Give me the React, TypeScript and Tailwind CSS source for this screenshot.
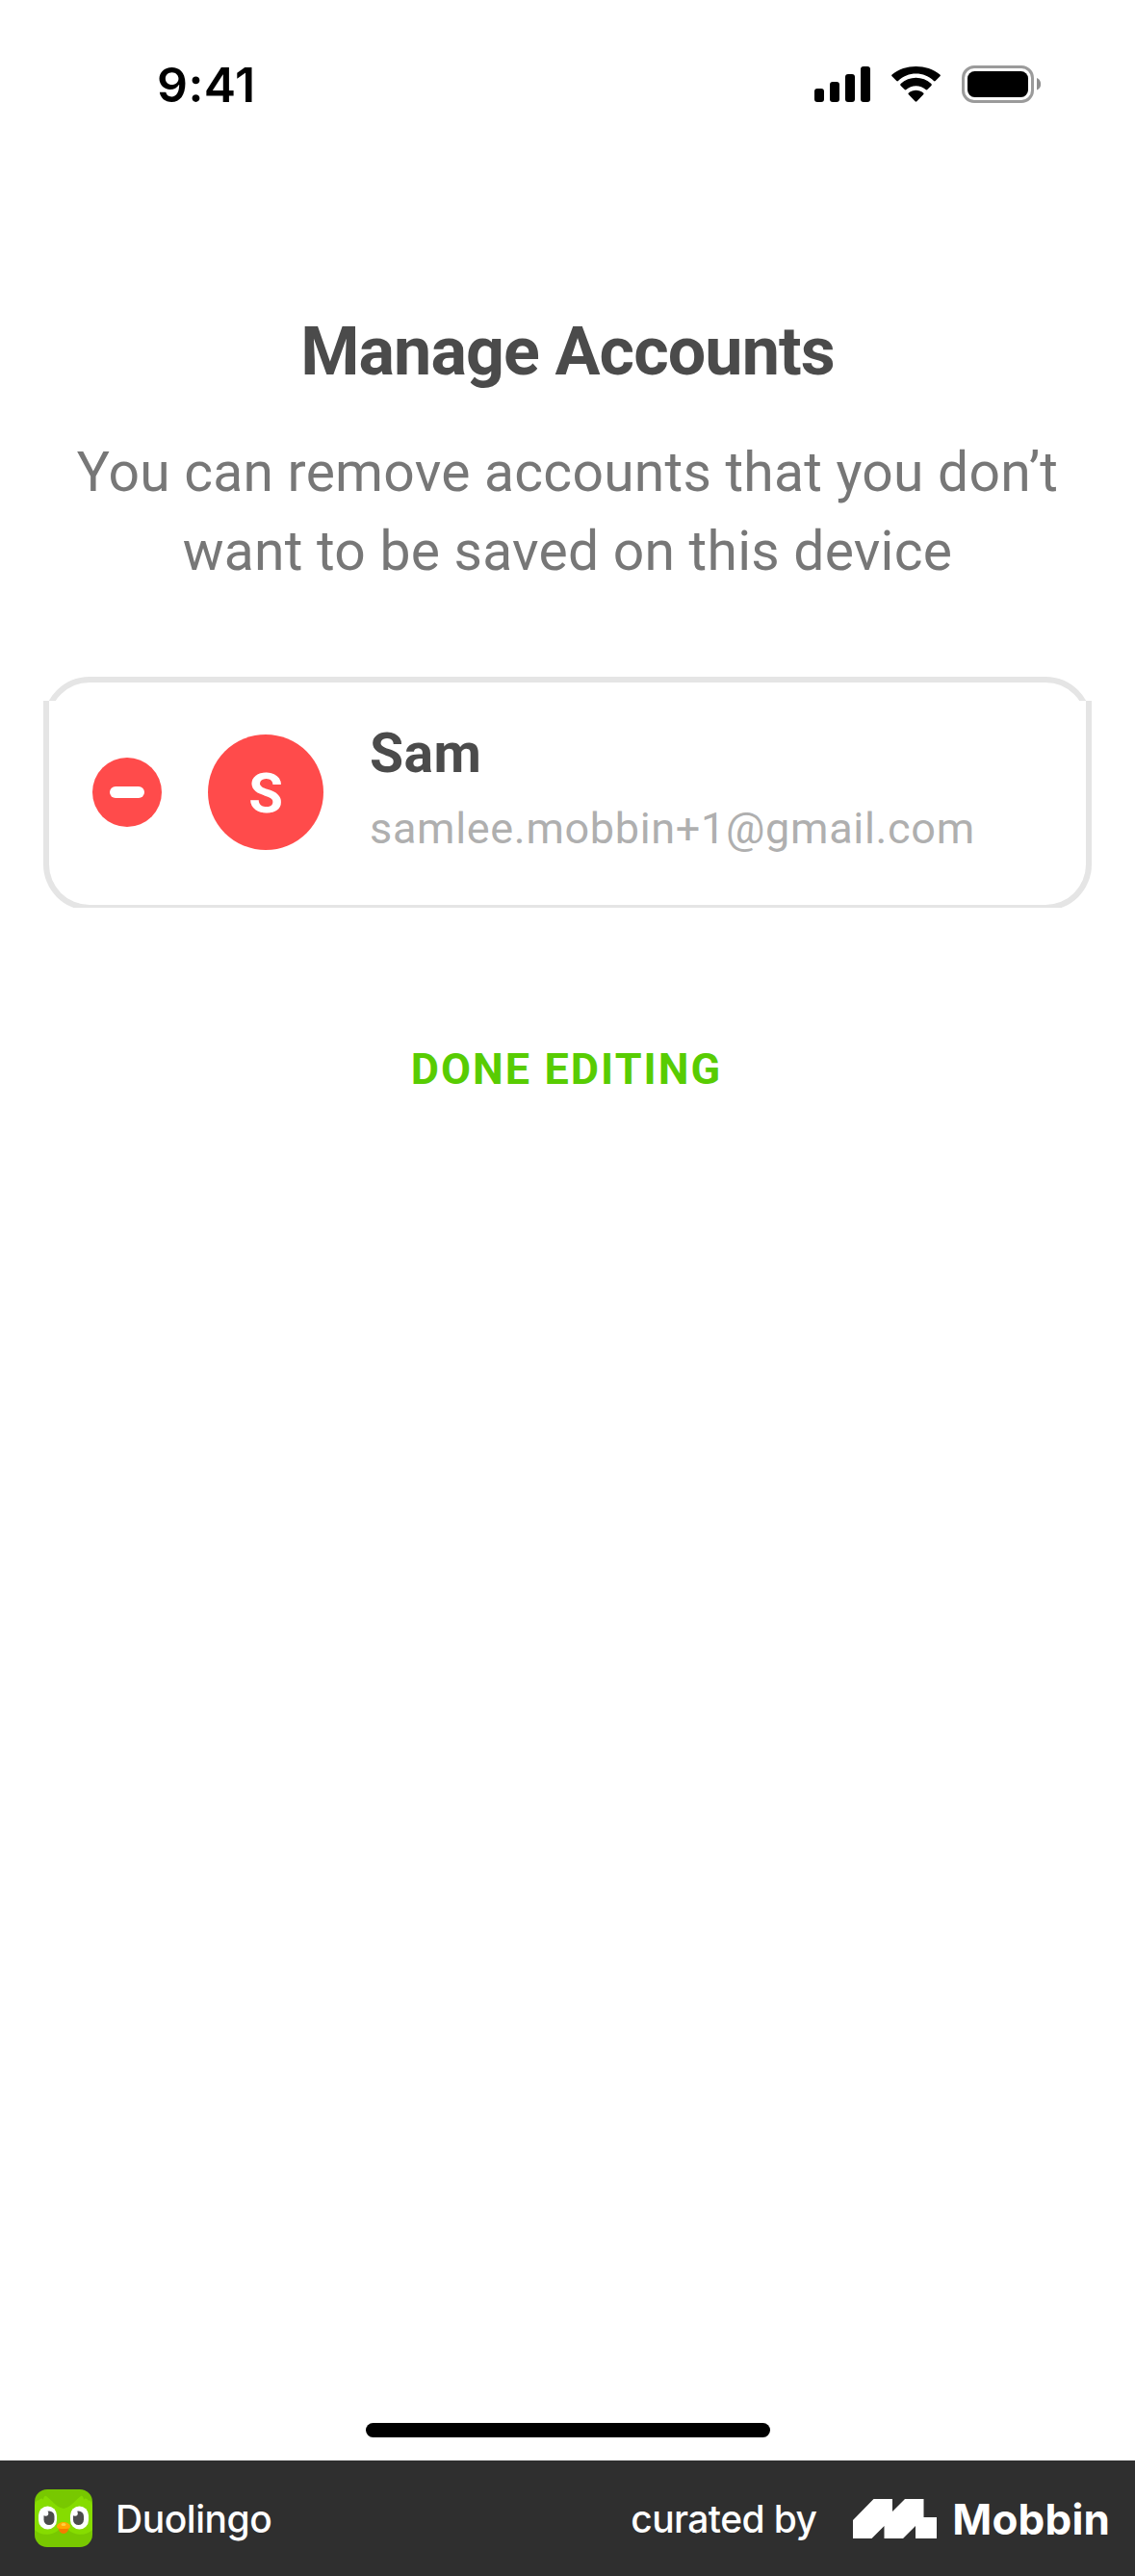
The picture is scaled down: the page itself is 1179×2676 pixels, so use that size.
import React from "react";

function SignalIcon() {
  return (
    <svg width="58" height="37" viewBox="0 0 58 37" fill="#000">
      <rect x="0" y="23" width="10" height="14" rx="3" />
      <rect x="16" y="16" width="10" height="21" rx="3" />
      <rect x="32" y="8" width="10" height="29" rx="3" />
      <rect x="48" y="0" width="10" height="37" rx="3" />
    </svg>
  );
}

function WifiIcon() {
  return (
    <svg width="51" height="37" viewBox="0 0 51 37" fill="#000">
      <path d="M25.5 7.6c6.900 0 13.500 2.650 18.500 7.400a1.200 1.200 0 0 0 1.700 0l4.700-4.700a1.300 1.300 0 0 0 0-1.850C36.500-2.800 14.500-2.800.6 8.450a1.300 1.300 0 0 0 0 1.850L5.300 15a1.200 1.200 0 0 0 1.700 0C12 10.250 18.600 7.600 25.500 7.600z" />
      <path d="M25.500 20.200c3.800 0 7.400 1.400 10.100 3.900a1.200 1.200 0 0 0 1.700 0l4.100-4.200a1.300 1.300 0 0 0 0-1.850c-8.900-8.400-22.900-8.400-31.800 0a1.300 1.300 0 0 0 0 1.850l4.100 4.200a1.200 1.200 0 0 0 1.700 0c2.700-2.500 6.300-3.900 10.100-3.900z" />
      <path d="M33.100 29.300a1.300 1.300 0 0 0 0-1.900c-4.400-3.700-10.800-3.700-15.200 0a1.300 1.300 0 0 0 0 1.900l6.700 6.900a1.250 1.250 0 0 0 1.800 0z" />
    </svg>
  );
}

function BatteryIcon() {
  return (
    <svg width="82" height="39" viewBox="0 0 82 39">
      <rect x="1.500" y="1.500" width="72" height="36" rx="11.500" fill="none" stroke="#9b9b9b" strokeWidth="3" />
      <rect x="6" y="6" width="63" height="27" rx="7.500" fill="#000" />
      <path d="M78 13v12.500c2.600-1.100 4.200-3.500 4.200-6.250S80.600 14.100 78 13z" fill="#8f8f8f" />
    </svg>
  );
}

function OwlIcon() {
  return (
    <svg width="60" height="60" viewBox="0 0 60 60">
      <defs>
        <clipPath id="tile">
          <rect width="60" height="60" rx="13" />
        </clipPath>
      </defs>
      <g clipPath="url(#tile)">
        <rect width="60" height="60" fill="#78c800" />
        <path d="M0 17c1-4 3-7 4-5 2-3 4-3 5-1 0-3 2-5 3-4 6 4 9 11 18 13 9-2 12-9 18-13 1-1 3 1 3 4 1-2 3-2 5 1 1-2 3 1 4 5v25c-6 7-20 6-26-1h-8c-6 7-20 8-26 1z" fill="#86dc00" />
        <rect x="4" y="17.500" width="19" height="24" rx="9.500" fill="#fff" />
        <rect x="37" y="17.500" width="19" height="24" rx="9.500" fill="#fff" />
        <rect x="9.500" y="22.500" width="11" height="14.500" rx="5.500" fill="#4b4b4b" />
        <rect x="40" y="22.500" width="11" height="14.500" rx="5.500" fill="#4b4b4b" />
        <circle cx="11.500" cy="25" r="2.800" fill="#fff" />
        <circle cx="42" cy="25" r="2.800" fill="#fff" />
        <path d="M24.500 39h11c0 4-2.500 7-5.500 7s-5.500-3-5.500-7z" fill="#f47c00" />
        <path d="M23 38.500c0-2.500 4-4.500 7-4.500s7 2 7 4.500-3 2.500-7 2.500-7 0-7-2.500z" fill="#ffa800" />
        <ellipse cx="30" cy="36.500" rx="2.500" ry="1.500" fill="#ffd040" />
      </g>
    </svg>
  );
}

function MobbinMark() {
  return (
    <svg width="87" height="41" viewBox="0 0 87 41" fill="#fff">
      <path d="M0 22 21.500 0H41v13L54 0h19.500v19H87v22H65V28L52 41H32.500V28L19.500 41H0z" />
    </svg>
  );
}

function StatusBar() {
  return (
    <header className="flex h-[176px] items-start justify-between pt-[68px] pr-[98px] pl-[163px]">
      <span className="-mt-[10px] font-['Inter',sans-serif] text-[50px] leading-[60px] font-semibold tracking-[0.450px] text-black">
        9:41
      </span>
      <div className="flex items-start">
        <div className="mt-px mr-[22px]">
          <SignalIcon />
        </div>
        <div className="mt-px mr-[22px]">
          <WifiIcon />
        </div>
        <BatteryIcon />
      </div>
    </header>
  );
}

function AccountCard() {
  return (
    <section className="mx-[45px] mt-[89px] grid h-[240px]">
      <div className="col-start-1 row-start-1 flex flex-col">
        <div className="h-[25px] overflow-hidden">
          <div className="h-[120px] rounded-[48px] border-[6px] border-[#e5e5e5]" />
        </div>
        <div className="flex h-[215px] flex-col justify-start overflow-hidden">
          <div className="h-[218px] shrink-0 rounded-b-[48px] border-[6px] border-t-0 border-[#e5e5e5]" />
        </div>
      </div>
      <div className="col-start-1 row-start-1 flex items-center pl-[51px]">
        <button aria-label="Remove account" className="flex size-[72px] items-center justify-center rounded-full bg-[#ff4b4b]">
          <span className="h-3 w-9 rounded-full bg-white" />
        </button>
        <div className="ml-12 flex size-[120px] items-center justify-center rounded-full bg-[#ff4b4b] font-bold text-white">
          <span className="mt-0.5 text-[58px] leading-[60px]">S</span>
        </div>
        <div className="ml-12 flex flex-col gap-[18px] pb-[3px]">
          <span className="text-[57px] leading-[60px] font-bold tracking-[0.400px] text-[#4b4b4b]">Sam</span>
          <span className="text-[45px] leading-[60px] tracking-[0.670px] text-[#afafaf]">samlee.mobbin+1@gmail.com</span>
        </div>
      </div>
    </section>
  );
}

export default function App() {
  return (
    <div className="flex h-[2676px] w-[1179px] flex-col bg-white font-['Roboto',sans-serif]">
      <StatusBar />
      <main className="flex flex-1 flex-col">
        <h1 className="mt-[148px] text-center text-[70px] leading-[82px] font-bold tracking-[-0.900px] text-[#4b4b4b]">
          Manage Accounts
        </h1>
        <p className="mt-[44px] text-center text-[57px] leading-[82px] tracking-[0.240px] text-[#777777]">
          You can remove accounts that you don’t
          <br />
          want to be saved on this device
        </p>
        <AccountCard />
        <button className="mt-[138px] mr-0.5 self-center text-[45px] leading-[60px] font-bold tracking-[2.050px] text-[#58cc02]">
          DONE EDITING
        </button>
      </main>
      <div className="mb-6 h-[15px] w-[420px] self-center rounded-full bg-black" />
      <footer className="flex h-[120px] items-center bg-[#2f2f2f] pr-[26px] pl-9 font-['Inter',sans-serif] text-white">
        <OwlIcon />
        <span className="mt-0.5 ml-6 text-[39px] leading-[60px] font-medium tracking-[-0.450px]">Duolingo</span>
        <span className="mt-0.5 ml-auto text-[39px] leading-[60px] font-medium tracking-[-0.610px]">curated by</span>
        <div className="ml-[38px]">
          <MobbinMark />
        </div>
        <span className="mt-px ml-4 text-[44px] leading-[60px] font-bold tracking-[0.150px]">Mobbin</span>
      </footer>
    </div>
  );
}
